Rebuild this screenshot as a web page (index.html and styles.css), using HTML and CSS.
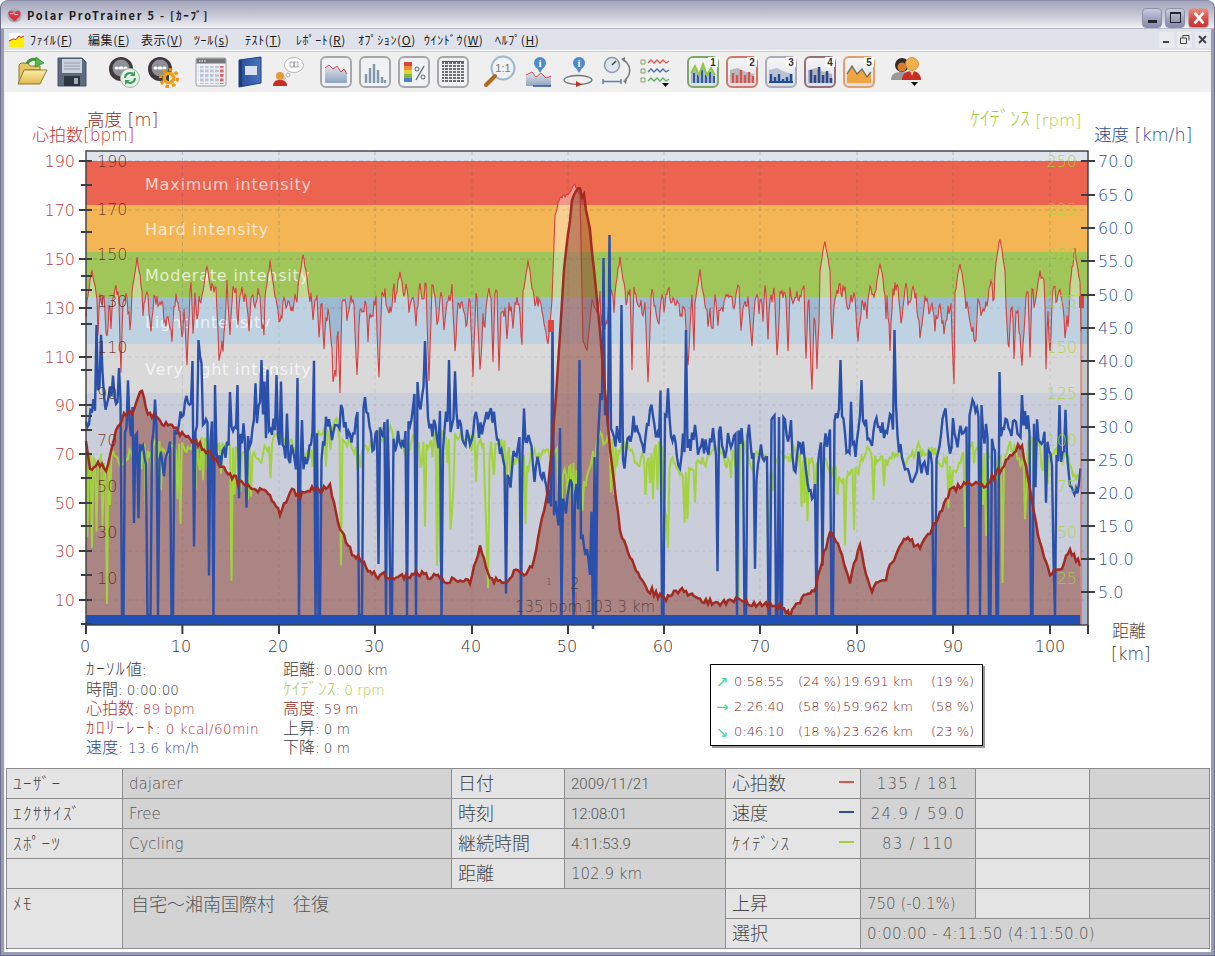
FILE: index.html
```html
<!DOCTYPE html>
<html lang="ja">
<head>
<meta charset="utf-8">
<title>Polar ProTrainer 5</title>
<link rel="stylesheet" href="styles.css">
</head>
<body>
<svg class="defs" aria-hidden="true">
  <defs>
    <linearGradient id="gFolder" x1="0" y1="0" x2="0" y2="1"><stop offset="0" stop-color="#fbeea8"/><stop offset="1" stop-color="#e0b84c"/></linearGradient>
    <linearGradient id="gBtn" x1="0" y1="0" x2="0" y2="1"><stop offset="0" stop-color="#f6f6f8"/><stop offset="1" stop-color="#dcdee4"/></linearGradient>
    <linearGradient id="gArea" x1="0" y1="0" x2="0" y2="1"><stop offset="0" stop-color="#e3e6ee"/><stop offset="1" stop-color="#8ea4c0"/></linearGradient>
    <linearGradient id="gBook" x1="0" y1="0" x2="1" y2="0"><stop offset="0" stop-color="#2a4f9c"/><stop offset="1" stop-color="#4a72bd"/></linearGradient>
    <pattern id="pCal" width="5" height="4.5" patternUnits="userSpaceOnUse"><rect width="3.6" height="3" fill="#b9c2d6"/></pattern>
    <pattern id="pCalR" width="5" height="4.5" patternUnits="userSpaceOnUse"><rect width="3.6" height="3" fill="#d0686a"/></pattern>
    <pattern id="pTab" width="4" height="3" patternUnits="userSpaceOnUse"><rect width="3" height="2" fill="#6a6c74"/></pattern>
  </defs>
</svg>
<div class="window">
  <header class="titlebar">
    <svg class="appicon" viewBox="0 0 16 16"><circle cx="8" cy="8" r="7.5" fill="#a9a9ad"/><path d="M8 14 C3 10 1.500 8 1.500 5.500 C1.500 3 5.500 2 8 5 C10.500 2 14.500 3 14.500 5.500 C14.500 8 13 10 8 14Z" fill="#d8344a"/><path d="M3 6 h3 l1 -1 l1 2 h4" fill="none" stroke="#fff" stroke-width=".8"/></svg>
    <span class="apptitle">Polar ProTrainer 5 - [ｶｰﾌﾞ]</span>
    <div class="winbtns">
      <span class="winbtn"><i class="g-min"></i></span>
      <span class="winbtn"><i class="g-max"></i></span>
      <span class="winbtn winbtn-close"><svg viewBox="0 0 20 20" class="g-x"><path d="M5 4 L15 16 M15 4 L5 16" stroke="#fff" stroke-width="3"/></svg></span>
    </div>
  </header>
  <nav class="menubar">
    <svg class="docicon" viewBox="0 0 15 14"><rect width="15" height="14" fill="#fff"/><rect y="7" width="15" height="7" fill="#ffee00"/><path d="M0 8 L4 6 L7 6.500 L10 3 L12 4.500 L15 3 V7 H0Z" fill="#ffee00"/><path d="M0 8 L4 6 L7 6.500 L10 3 L12 4.500 L15 3" fill="none" stroke="#c8281e"/></svg>
    <span class="mi mi-1">ﾌｧｲﾙ(<u>F</u>)</span>
    <span class="mi mi-2">編集(<u>E</u>)</span>
    <span class="mi mi-3">表示(<u>V</u>)</span>
    <span class="mi mi-4">ﾂｰﾙ(<u>s</u>)</span>
    <span class="mi mi-5">ﾃｽﾄ(<u>T</u>)</span>
    <span class="mi mi-6">ﾚﾎﾟｰﾄ(<u>R</u>)</span>
    <span class="mi mi-7">ｵﾌﾟｼｮﾝ(<u>O</u>)</span>
    <span class="mi mi-8">ｳｲﾝﾄﾞｳ(<u>W</u>)</span>
    <span class="mi mi-9">ﾍﾙﾌﾟ(<u>H</u>)</span>
    <div class="mdibtns">
      <span class="mdibtn"><svg viewBox="0 0 15 15"><rect x="4" y="9" width="6" height="2" fill="#444"/></svg></span>
      <span class="mdibtn"><svg viewBox="0 0 15 15"><path d="M6 3.500 H12 V8.500 M3.500 6 H9.500 V11.500 H3.500Z M6 3 V5.500" fill="none" stroke="#444"/></svg></span>
      <span class="mdibtn"><svg viewBox="0 0 15 15"><path d="M4 4 L11 11 M11 4 L4 11" stroke="#444" stroke-width="2"/></svg></span>
    </div>
  </nav>
  <div class="toolbar">
    <div class="tgroup tg-file">
      <svg class="ic" viewBox="0 0 32 32"><path d="M3 28 V9 L5 7 H12 L14 10 H24 V14 H9 Z" fill="#e6c765" stroke="#8d7a35"/><path d="M8 14 H31 L24 28 H2 Z" fill="url(#gFolder)" stroke="#8d7a35"/><path d="M11 8 C13 3 19 2 22 5" fill="none" stroke="#3f9a3a" stroke-width="3"/><path d="M20 1 L28 7 L19 11 Z" fill="#56b84b" stroke="#2f7f2e" stroke-width=".6"/></svg>
      <svg class="ic" viewBox="0 0 32 32"><path d="M3 2 H27 L31 6 V30 H3 Z" fill="#5c6a80" stroke="#465266"/><rect x="7" y="3" width="20" height="14" fill="#ccd2dc"/><path d="M9 7 H25 M9 10 H25 M9 13 H25" stroke="#8f99a8"/><rect x="9" y="20" width="16" height="10" fill="#2c3442"/><rect x="19" y="22" width="4" height="6" fill="#a8aeb8"/></svg>
    </div>
    <div class="tgroup tg-dash">
      <svg class="ic" viewBox="0 0 32 32"><circle cx="13" cy="13" r="12" fill="#3f383c"/><circle cx="13" cy="12" r="8.500" fill="#8d9097"/><path d="M8 12 h1 M12 12 h2 M17 12 h1" stroke="#fff" stroke-width="3" stroke-linecap="round"/><circle cx="22" cy="22" r="9.500" fill="#e6f0e8" stroke="#9ab8a2"/><path d="M17 22 a5 5 0 0 1 9 -3 M27 22 a5 5 0 0 1 -9 3" fill="none" stroke="#3aa05a" stroke-width="2"/><path d="M27 15 v5 h-5 Z M17 29 v-5 h5 Z" fill="#3aa05a"/></svg>
      <svg class="ic" viewBox="0 0 32 32"><circle cx="13" cy="13" r="12" fill="#3f383c"/><circle cx="13" cy="12" r="8.500" fill="#8d9097"/><path d="M8 12 h1 M12 12 h2 M17 12 h1" stroke="#fff" stroke-width="3" stroke-linecap="round"/><circle cx="22" cy="22" r="8.500" fill="none" stroke="#e6950f" stroke-width="3" stroke-dasharray="3.600 3"/><circle cx="22" cy="22" r="6.500" fill="#eea21b"/><circle cx="22" cy="22" r="3" fill="#3b3a36"/><path d="M22 19 a3 3 0 0 1 0 6Z" fill="#e8e8d8"/></svg>
    </div>
    <div class="tgroup">
      <svg class="ic" viewBox="0 0 32 32"><rect x="1" y="2" width="30" height="28" rx="2" fill="#f0f2f6" stroke="#9c9ea4"/><rect x="1.500" y="2.500" width="29" height="5" fill="#75757c"/><path d="M4 5 h7" stroke="#fff" stroke-dasharray="1.500 1"/><rect x="3.500" y="10" width="20" height="18" fill="url(#pCal)"/><rect x="23.500" y="10" width="6" height="18" fill="url(#pCalR)"/></svg>
      <svg class="ic" viewBox="0 0 32 32"><path d="M5 4 L27 1 V27 L5 31 Z" fill="url(#gBook)" stroke="#1f3e80"/><path d="M5 4 V31 H8 V5 Z" fill="#1e3a78"/><rect x="11" y="10" width="12" height="9" fill="#d8e0ef"/></svg>
      <svg class="ic" viewBox="0 0 32 32"><ellipse cx="21" cy="9" rx="9.500" ry="7.500" fill="#fff" stroke="#b6b6ba"/><path d="M17 6 h4 v5 h-4z M21 6 h4 v5 h-4z" fill="#fff" stroke="#909096" stroke-width=".8"/><circle cx="15" cy="19" r="2" fill="#fff" stroke="#b6b6ba"/><circle cx="11" cy="22" r="1.300" fill="#fff" stroke="#b6b6ba"/><circle cx="7" cy="20" r="4" fill="#e69a38"/><path d="M0 30 C0 25 3 24 7 24 C11 24 14 25 14 30Z" fill="#c92e24"/></svg>
    </div>
    <div class="tgroup">
      <svg class="ic" viewBox="0 0 32 32"><rect x="1" y="1" width="30" height="30" rx="5" fill="#f0f1f3" stroke="#a5a7ab" stroke-width="2"/><path d="M5 12 L9 9 L13 13 L17 10 L21 16 L24 13 L27 18 V27 H5Z" fill="url(#gArea)"/><path d="M5 12 L9 9 L13 13 L17 10 L21 16 L24 13 L27 18" fill="none" stroke="#d8484e"/></svg>
      <svg class="ic" viewBox="0 0 32 32"><rect x="1" y="1" width="30" height="30" rx="5" fill="#f0f1f3" stroke="#a5a7ab" stroke-width="2"/><path d="M7 27 V18 M11 27 V12 M15 27 V8 M19 27 V14 M23 27 V21 M26 27 V24" stroke="#7e97ad" stroke-width="2.400"/></svg>
      <svg class="ic" viewBox="0 0 32 32"><rect x="1" y="1" width="30" height="30" rx="5" fill="#f0f1f3" stroke="#a5a7ab" stroke-width="2"/><rect x="6" y="6" width="8" height="4" fill="#d8433a"/><rect x="6" y="10" width="8" height="4" fill="#ee8f2a"/><rect x="6" y="14" width="8" height="4" fill="#e8d232"/><rect x="6" y="18" width="8" height="4" fill="#7ebb3b"/><rect x="6" y="22" width="8" height="4" fill="#4a82c4"/><circle cx="19" cy="13" r="2" fill="none" stroke="#5c6470"/><circle cx="25" cy="21" r="2" fill="none" stroke="#5c6470"/><path d="M26 10 L18 24" stroke="#5c6470" stroke-width="1.300"/></svg>
      <svg class="ic" viewBox="0 0 32 32"><rect x="1" y="1" width="30" height="30" rx="5" fill="#f0f1f3" stroke="#a5a7ab" stroke-width="2"/><rect x="5" y="6" width="22" height="20" fill="url(#pTab)"/><path d="M5 5.500 H27" stroke="#555"/></svg>
    </div>
    <div class="tgroup">
      <svg class="ic" viewBox="0 0 32 32"><circle cx="19" cy="12" r="11.500" fill="#f0f2f6" stroke="#9fb6cc" stroke-width="2"/><text x="19" y="16" class="ic-txt" text-anchor="middle">1:1</text><path d="M11 20 L2 29" stroke="#b06a20" stroke-width="4" stroke-linecap="round"/></svg>
      <svg class="ic" viewBox="0 0 32 32"><circle cx="17" cy="7" r="6" fill="#4c8ad0"/><text x="17" y="11" class="ic-i" text-anchor="middle">i</text><path d="M14 12 L17 17 L20 12Z" fill="#4c8ad0"/><path d="M3 19 L9 16 L13 21 L18 17 L23 22 L28 20 V30 H3Z" fill="url(#gArea)"/><path d="M3 19 L9 16 L13 21 L18 17 L23 22 L28 20" fill="none" stroke="#dc4a4a"/><path d="M10 30 H28" stroke="#2b55a8" stroke-width="1.500"/></svg>
      <svg class="ic" viewBox="0 0 32 32"><circle cx="17" cy="7" r="6" fill="#4c8ad0"/><text x="17" y="11" class="ic-i" text-anchor="middle">i</text><path d="M14 12 L17 17 L20 12Z" fill="#4c8ad0"/><ellipse cx="16" cy="24" rx="14" ry="4.500" fill="none" stroke="#707478" stroke-width="1.300"/><path d="M14 25 L20 28.500 L14 31Z" fill="#c92e24"/></svg>
      <svg class="ic" viewBox="0 0 32 32"><circle cx="11" cy="9" r="7.500" fill="#dde6ef" stroke="#8c98a6" stroke-width="1.500"/><path d="M11 9 L15 5" stroke="#444" stroke-width="1.500"/><path d="M2 23 V28 M2 25.500 H20 M20 23 V28" stroke="#5d82b0" stroke-width="1.500"/><path d="M22 4 C30 8 31 18 24 24" fill="none" stroke="#777" stroke-width="1.500"/><path d="M20 3 L24 1 L24 6Z M22 25 L26 23 L25 28Z" fill="#777"/></svg>
      <svg class="ic" viewBox="0 0 32 32"><path d="M1 4 h4 v4 h-4z M1 13 h4 v4 h-4z M1 22 h4 v4 h-4z" fill="#f4f6ea" stroke="#6a8a4a" stroke-width=".8"/><path d="M8 7 l3 -3 l3 3 l3 -3 l3 3 l3 -3 l3 3 l3 -2" fill="none" stroke="#d8584e" stroke-width="1.300"/><path d="M8 16 l3 -3 l3 3 l3 -3 l3 3 l3 -3 l3 3 l3 -2" fill="none" stroke="#4a70b8" stroke-width="1.300"/><path d="M8 25 l3 -3 l3 3 l3 -3 l3 3 l3 -3 l3 3 l3 -2" fill="none" stroke="#58b060" stroke-width="1.300"/><path d="M22 27 h7 l-3.500 4z" fill="#111"/></svg>
    </div>
    <div class="tgroup">
      <svg class="ic" viewBox="0 0 32 32"><rect x="1" y="1" width="30" height="30" rx="5" fill="url(#gBtn)" stroke="#7fa868" stroke-width="2"/><path d="M4 27 V16 L8 12 L12 18 L16 10 L20 18 L24 14 L28 20 V27Z" fill="#aab4c4"/><path d="M7 27 V17 M11 27 V19 M15 27 V14 M19 27 V19 M23 27 V16 M27 27 V20" stroke="#2c5ca8" stroke-width="2"/><path d="M4 17 L8 10 L12 19 L16 8 L20 19 L24 12 L28 19" fill="none" stroke="#8cc832" stroke-width="1.800"/><path d="M21 1 H31 V11 H21Z" fill="#fff"/><text x="26" y="10" class="ic-num" text-anchor="middle">1</text></svg>
      <svg class="ic" viewBox="0 0 32 32"><rect x="1" y="1" width="30" height="30" rx="5" fill="url(#gBtn)" stroke="#d07868" stroke-width="2"/><path d="M4 27 V14 L12 12 L20 16 L28 18 V27Z" fill="#b8bac2"/><path d="M7 27 V17 M11 27 V19 M15 27 V14 M19 27 V19 M23 27 V16 M27 27 V20" stroke="#d8544a" stroke-width="2.400"/><path d="M21 1 H31 V11 H21Z" fill="#fff"/><text x="26" y="10" class="ic-num" text-anchor="middle">2</text></svg>
      <svg class="ic" viewBox="0 0 32 32"><rect x="1" y="1" width="30" height="30" rx="5" fill="url(#gBtn)" stroke="#a9acb8" stroke-width="2"/><path d="M4 27 V14 L12 12 L20 16 L28 18 V27Z" fill="#bcc2d0"/><path d="M6 27 V18 M10 27 V21 M14 27 V18 M18 27 V23 M22 27 V21 M26 27 V18" stroke="#1f4c9c" stroke-width="2.400"/><path d="M4 26 H28" stroke="#1f4c9c" stroke-width="2"/><path d="M21 1 H31 V11 H21Z" fill="#fff"/><text x="26" y="10" class="ic-num" text-anchor="middle">3</text></svg>
      <svg class="ic" viewBox="0 0 32 32"><rect x="1" y="1" width="30" height="30" rx="5" fill="url(#gBtn)" stroke="#94707c" stroke-width="2"/><path d="M4 27 V14 L12 12 L20 16 L28 18 V27Z" fill="#b2b4c0"/><path d="M7 27 V14 M11 27 V19 M15 27 V11 M19 27 V19 M23 27 V15 M27 27 V22" stroke="#2c4888" stroke-width="2.600"/><path d="M21 1 H31 V11 H21Z" fill="#fff"/><text x="26" y="10" class="ic-num" text-anchor="middle">4</text></svg>
      <svg class="ic" viewBox="0 0 32 32"><rect x="1" y="1" width="30" height="30" rx="5" fill="url(#gBtn)" stroke="#e0a068" stroke-width="2"/><path d="M4 27 V18 L9 10 L14 18 L19 13 L24 21 L28 16 V27Z" fill="#f0a440"/><path d="M4 18 L9 10 L14 18 L19 13 L24 21 L28 16" fill="none" stroke="#6a6a60" stroke-width="1.300"/><path d="M21 1 H31 V11 H21Z" fill="#fff"/><text x="26" y="10" class="ic-num" text-anchor="middle">5</text></svg>
    </div>
    <div class="tgroup">
      <svg class="ic" viewBox="0 0 32 32"><circle cx="12" cy="9" r="7" fill="#332b28"/><circle cx="12" cy="11" r="4.500" fill="#d87a2c"/><path d="M1 24 C1 17 6 16 12 16 C18 16 20 19 20 24Z" fill="#9a9a9c"/><circle cx="22" cy="8" r="6.500" fill="#f0b050" stroke="#c88830" stroke-width=".8"/><path d="M12 24 C12 18 16 15 22 15 C28 15 31 19 31 24Z" fill="#c92e24"/><path d="M20 15 L22 20 L24 15Z" fill="#eecf8f"/><path d="M21 26 h7 l-3.500 4z" fill="#111"/></svg>
    </div>
  </div>
  <main class="client">
    <svg id="chart" class="chart" viewBox="5 92 1207 568" width="1207" height="568">
      <rect x="86" y="151" width="1002" height="474" fill="#dfe4ea"/>
      <rect x="86" y="161" width="1002" height="44" fill="#ec6350"/>
      <rect x="86" y="205" width="1002" height="47" fill="#f4b655"/>
      <rect x="86" y="252" width="1002" height="45" fill="#a0c65a"/>
      <rect x="86" y="297" width="1002" height="47" fill="#9cbbd2"/>
      <rect x="86" y="344" width="1002" height="49" fill="#c5c5c5"/>
      <rect x="86" y="393" width="1002" height="232" fill="#acb4c7"/>
      <g class="zone">
        <text x="145" y="190">Maximum intensity</text>
        <text x="145" y="235">Hard intensity</text>
        <text x="145" y="281">Moderate intensity</text>
        <text x="145" y="328">Light intensity</text>
        <text x="145" y="375">Very light intensity</text>
      </g>
      <path class="grid" d="M86 161H1088M86 210H1088M86 259H1088M86 308H1088M86 357H1088M86 405H1088M86 454H1088M86 503H1088M86 551H1088M86 600H1088M182.400 151V625M279 151V625M375 151V625M472 151V625M568 151V625M664 151V625M760 151V625M857 151V625M953 151V625M1050 151V625"/>
      <path id="hrFill" class="hr-fill"/>
      <path id="hrLine" class="hr-line"/>
      <path id="altFill" class="alt-fill"/>
      <path id="cadLine" class="cad-line"/>
      <path id="spdLine" class="spd-line"/>
      <path id="altLine" class="alt-line"/>
      <rect x="86" y="615" width="994" height="10" fill="#2050b5"/>
      <path d="M1081 298V625" stroke="#d8584e" stroke-width="1"/>
      <rect x="1079" y="296" width="5" height="12" fill="#d8453f"/>
      <rect x="548" y="320" width="5" height="12" fill="#e0443c"/>
      <path d="M576 592V615" stroke="#d8453f"/>
      <g class="readout">
        <text x="570" y="589">2</text>
        <text x="546" y="585" class="readout-s">1</text>
        <text x="515" y="612">135 bpm</text>
        <text x="584" y="612">103.3 km</text>
      </g>
      <g class="alt-lab">
        <text x="97" y="167">190</text><text x="97" y="215">170</text><text x="97" y="260">150</text><text x="97" y="307">130</text><text x="97" y="353">110</text><text x="97" y="399">90</text><text x="97" y="446">70</text><text x="97" y="492">50</text><text x="97" y="538">30</text><text x="97" y="584">10</text>
      </g>
      <g class="cad-lab">
        <text x="1077" y="167">250</text><text x="1077" y="215">225</text><text x="1077" y="260">200</text><text x="1077" y="307">175</text><text x="1077" y="353">150</text><text x="1077" y="399">125</text><text x="1077" y="446">100</text><text x="1077" y="492">75</text><text x="1077" y="538">50</text><text x="1077" y="584">25</text>
      </g>
      <rect x="86" y="151" width="1002" height="474" class="frame"/>
      <path class="ticks" d="M79 161H92M79 210H92M79 259H92M79 308H92M79 357H92M79 405H92M79 454H92M79 503H92M79 551H92M79 600H92M81 185H92M81 232H92M81 276H92M81 290H92M81 324H92M81 370H92M81 416H92M81 430H92M81 478H92M81 526H92M81 575H92M81 624H92M1081 161H1095M1081 195H1095M1081 228H1095M1081 261H1095M1081 295H1095M1081 328H1095M1081 361H1095M1081 394H1095M1081 427H1095M1081 460H1095M1081 493H1095M1081 526H1095M1081 559H1095M1081 592H1095M86 625V634M182.400 625V634M279 625V634M375 625V634M472 625V634M568 625V634M664 625V634M760 625V634M857 625V634M953 625V634M1050 625V634M1088 625V634"/>
      <g class="hr-lab">
        <text x="75" y="167">190</text><text x="75" y="216">170</text><text x="75" y="265">150</text><text x="75" y="314">130</text><text x="75" y="363">110</text><text x="75" y="411">90</text><text x="75" y="460">70</text><text x="75" y="509">50</text><text x="75" y="557">30</text><text x="75" y="606">10</text>
      </g>
      <g class="spd-lab">
        <text x="1098" y="167">70.0</text><text x="1098" y="201">65.0</text><text x="1098" y="234">60.0</text><text x="1098" y="267">55.0</text><text x="1098" y="301">50.0</text><text x="1098" y="334">45.0</text><text x="1098" y="367">40.0</text><text x="1098" y="400">35.0</text><text x="1098" y="433">30.0</text><text x="1098" y="466">25.0</text><text x="1098" y="499">20.0</text><text x="1098" y="532">15.0</text><text x="1098" y="565">10.0</text><text x="1098" y="598">5.0</text>
      </g>
      <g class="x-lab">
        <text x="85" y="652">0</text><text x="181" y="652">10</text><text x="278" y="652">20</text><text x="374" y="652">30</text><text x="471" y="652">40</text><text x="567" y="652">50</text><text x="663" y="652">60</text><text x="760" y="652">70</text><text x="856" y="652">80</text><text x="953" y="652">90</text><text x="1050" y="652">100</text>
      </g>
      <text x="87" y="126" class="ax-alt">高度 [m]</text>
      <text x="32" y="141" class="ax-hr">心拍数[bpm]</text>
      <text x="970" y="126" class="ax-cad"><tspan class="ax-kana">ｹｲﾃﾞﾝｽ</tspan> [rpm]</text>
      <text x="1094" y="141" class="ax-spd">速度 [km/h]</text>
      <text x="1112" y="637" class="ax-dist">距離</text>
      <text x="1111" y="660" class="ax-dist">[km]</text>
    </svg>
    <section class="info">
      <div class="info-col info-col-a">
        <div><span class="kn">ｶｰｿﾙ</span><span class="kj">値</span>:</div>
        <div><span class="kj">時間</span>: 0:00:00</div>
        <div class="c-hr"><span class="kj">心拍数</span>: 89 bpm</div>
        <div class="c-hr c-wide"><span class="kn">ｶﾛﾘｰﾚｰﾄ</span>: 0 kcal/60min</div>
        <div class="c-spd"><span class="kj">速度</span>: 13.6 km/h</div>
      </div>
      <div class="info-col info-col-b">
        <div><span class="kj">距離</span>: 0.000 km</div>
        <div class="c-cad"><span class="kn kn-tight">ｹｲﾃﾞﾝｽ</span>: 0 rpm</div>
        <div class="c-alt"><span class="kj">高度</span>: 59 m</div>
        <div><span class="kj">上昇</span>: 0 m</div>
        <div><span class="kj">下降</span>: 0 m</div>
      </div>
      <div class="slopes">
        <span class="arrow">↗</span><span>0:58:55</span><span>(24 %)</span><span>19.691 km</span><span>(19 %)</span>
        <span class="arrow">→</span><span>2:26:40</span><span>(58 %)</span><span>59.962 km</span><span>(58 %)</span>
        <span class="arrow">↘</span><span>0:46:10</span><span>(18 %)</span><span>23.626 km</span><span>(23 %)</span>
      </div>
    </section>
    <table class="summary">
      <colgroup><col class="w1"><col class="w2"><col class="w3"><col class="w4"><col class="w5"><col class="w6"><col class="w7"><col class="w8"></colgroup>
      <tr><th class="kana">ﾕｰｻﾞｰ</th><td>dajarer</td><th>日付</th><td class="num">2009/11/21</td><th><span class="legend">心拍数<i class="sw sw-hr"></i></span></th><td class="ctr">135 / 181</td><th></th><td></td></tr>
      <tr><th class="kana">ｴｸｻｻｲｽﾞ</th><td>Free</td><th>時刻</th><td class="num">12:08:01</td><th><span class="legend">速度<i class="sw sw-spd"></i></span></th><td class="ctr">24.9 / 59.0</td><th></th><td></td></tr>
      <tr><th class="kana">ｽﾎﾟｰﾂ</th><td>Cycling</td><th>継続時間</th><td class="num">4:11:53.9</td><th><span class="legend kana">ｹｲﾃﾞﾝｽ<i class="sw sw-cad"></i></span></th><td class="ctr">83 / 110</td><th></th><td></td></tr>
      <tr><th></th><td></td><th>距離</th><td>102.9 km</td><th></th><td></td><th></th><td></td></tr>
      <tr><th rowspan="2" class="kana top">ﾒﾓ</th><td rowspan="2" colspan="3" class="memo">自宅～湘南国際村　往復</td><th>上昇</th><td>750 (-0.1%)</td><th></th><td></td></tr>
      <tr><th>選択</th><td colspan="3" class="sel">0:00:00 - 4:11:50 (4:11:50.0)</td></tr>
    </table>
  </main>
</div>
<script src="chart.js"></script>
</body>
</html>
```
FILE: styles.css
```css
* { box-sizing: border-box; }
html, body { margin: 0; padding: 0; background: #fff; }
body { width: 1215px; height: 956px; overflow: hidden; font-family: "DejaVu Sans", "Noto Sans CJK JP", sans-serif; font-weight: 200; color: #444; }
.defs { position: absolute; width: 0; height: 0; }
.window { width: 1215px; height: 956px; display: flex; flex-direction: column; border: 1px solid #6d6f8e; border-top-color: #8a8ca8; border-radius: 8px 8px 0 0; background: #9a9cb6; padding: 0 3px 3px; }
.titlebar { flex: none; height: 28px; margin: 0 -3px; padding: 0 5px 0 6px; display: flex; align-items: center; gap: 5px; background: linear-gradient(#a2a4ba 0, #b0b2c5 20%, #d2d3de 65%, #f1f1f5 96%, #8a8ca2 100%); border-radius: 7px 7px 0 0; }
.appicon { width: 15px; height: 15px; flex: none; }
.apptitle { font: 700 11px "Noto Sans CJK JP", "DejaVu Sans", sans-serif; letter-spacing: 1.750px; color: #1b1b20; }
.winbtns { margin-left: auto; margin-top: 5px; display: flex; gap: 3px; }
.winbtn { width: 20px; height: 20px; border-radius: 4px; border: 1px solid #8f91ac; background: linear-gradient(#c9cbdc, #9da0bc 60%, #888bab); display: flex; align-items: center; justify-content: center; }
.winbtn-close { width: 21px; border-color: #c9a0a0; background: linear-gradient(#ee8878, #d8453f 60%, #c23636); }
.g-min { width: 9px; height: 3px; background: #24262e; margin-top: 8px; }
.g-max { width: 11px; height: 11px; border: 1px solid #24262e; border-top-width: 2px; }
.g-x { width: 18px; height: 18px; }
.menubar { flex: none; height: 22px; display: flex; align-items: center; background: #dfe2ea; border-bottom: 1px solid #fff; padding-left: 5px; }
.docicon { width: 15px; height: 14px; flex: none; margin-right: 6px; }
.mi { font: 400 12px "Noto Sans CJK JP", "DejaVu Sans", sans-serif; letter-spacing: .6px; color: #1a1a1a; white-space: nowrap; }
.mi u { text-underline-offset: 1px; }
.mi-1 { width: 58px; }
.mi-2 { width: 53px; }
.mi-3 { width: 53px; }
.mi-4 { width: 51px; }
.mi-5 { width: 51px; }
.mi-6 { width: 62px; }
.mi-7 { width: 66px; }
.mi-8 { width: 71px; }
.mdibtns { margin-left: auto; display: flex; gap: 3px; padding-right: 1px; }
.mdibtn { width: 15px; height: 16px; background: #e9eaee; display: block; }
.mdibtn svg { display: block; width: 15px; height: 15px; }
.toolbar { flex: none; height: 41px; display: flex; align-items: center; gap: 15px; padding-left: 12px; background: #efefef; border-top: 1px solid #c9c9c9; }
.tgroup { display: flex; gap: 7px; }
.tg-file { margin-right: 6px; }
.tg-dash { margin-right: 1px; }
.ic { width: 32px; height: 32px; flex: none; display: block; overflow: visible; }
.ic-txt { font: 400 11px "Liberation Sans", sans-serif; fill: #777; }
.ic-i { font: 700 11px "Liberation Serif", serif; fill: #fff; }
.ic-num { font: 700 10px "Liberation Sans", sans-serif; fill: #333; }
.client { flex: 1; min-height: 0; background: #fff; border-left: 1px solid #eee; display: flex; flex-direction: column; }
.chart { flex: none; display: block; width: 1207px; height: 568px; overflow: visible; }
.chart text { font-family: "DejaVu Sans", "Noto Sans CJK JP", sans-serif; font-weight: 200; font-size: 16px; }
.zone text { fill: rgba(255,255,255,.72); font-size: 16px; letter-spacing: .8px; font-weight: 400; }
.grid { fill: none; stroke: rgba(90,90,90,.28); stroke-dasharray: 4 3; }
.hr-fill { fill: rgba(255,255,255,.35); }
.hr-line { fill: none; stroke: #d63f3f; stroke-width: 1.100; }
.alt-fill { fill: rgba(141,58,46,.5); }
.alt-line { fill: none; stroke: #a12a22; stroke-width: 2.500; }
.cad-line { fill: none; stroke: #a2d23c; stroke-width: 2; }
.spd-line { fill: none; stroke: #2a50ab; stroke-width: 2.400; }
.frame { fill: none; stroke: #3a3d42; stroke-width: 1.400; }
.ticks { fill: none; stroke: #3a3d42; stroke-width: 2; }
.readout text { fill: rgba(60,50,50,.8); font-size: 15px; }
.readout .readout-s { font-size: 9px; }
.alt-lab text { fill: rgba(95,35,20,.85); }
.cad-lab text { fill: rgba(170,210,60,.9); text-anchor: end; }
.hr-lab text { fill: #b53a3f; text-anchor: end; }
.spd-lab text { fill: #2f4f8c; }
.x-lab text { fill: #333; text-anchor: middle; }
.chart .ax-alt { fill: #8b2b25; font-size: 17.500px; }
.chart .ax-hr { fill: #c1383a; font-size: 17px; }
.chart .ax-cad { fill: #a9cc3e; font-size: 16.500px; }
.chart .ax-kana { font-size: 20px; }
.chart .ax-spd { fill: #2d4e92; font-size: 17.500px; }
.chart .ax-dist { fill: #444; font-size: 17px; }
.info { flex: none; height: 108px; display: flex; padding-left: 81px; font-size: 13.500px; color: #3c3c3c; }
.info-col > div { height: 19.500px; line-height: 19.500px; white-space: nowrap; }
.kn { font-size: 17px; letter-spacing: 1.500px; }
.kn-tight { letter-spacing: .3px; }
.kj { font-size: 16px; }
.info-col-a { width: 197px; }
.info-col-b { width: 427px; }
.c-hr { color: #b23034; }
.c-wide { letter-spacing: .5px; }
.c-spd { color: #2a4a88; letter-spacing: .3px; }
.c-cad { color: #a5cc3f; }
.c-alt { color: #8b2b25; }
.slopes { width: 273px; height: 82px; margin-top: 4px; background: #fff; border: 1px solid #000; box-shadow: 2px 2px 0 #9a9a9a; display: grid; grid-template-columns: 18px 64px 45px 88px 42px; align-items: center; padding: 5px 0 1px 5px; font-size: 13px; line-height: 24px; color: #7a2a2a; white-space: nowrap; }
.arrow { color: #3ad88f; font-size: 15px; font-weight: 400; }
.summary { flex: none; margin-left: 1px; width: 1203px; height: 180px; table-layout: fixed; border-collapse: collapse; font-size: 15px; color: #555; }
.summary th, .summary td { border: 1px solid #8c8c8c; height: 30px; padding: 0 6px; font-weight: 200; text-align: left; white-space: nowrap; overflow: hidden; }
.summary th { background: #e4e4e4; font-size: 18px; color: #444; padding-bottom: 3px; }
.summary td { background: #d3d3d3; }
.summary th.kana, .summary .kana { font-size: 17px; letter-spacing: 1.500px; }
.summary .top, .summary .memo { vertical-align: top; padding-top: 1px; }
.summary .memo { font-size: 18px; padding-left: 8px; }
.summary .num { font-family: "Roboto", "Liberation Sans", sans-serif; font-weight: 300; font-size: 15px; }
.summary .ctr { text-align: center; letter-spacing: 1.200px; }
.summary .sel { letter-spacing: .3px; }
.w1 { width: 116px; } .w2 { width: 329px; } .w3 { width: 113px; } .w4 { width: 161px; }
.w5 { width: 135px; } .w6 { width: 115px; } .w7 { width: 114px; } .w8 { width: 120px; }
.legend { display: flex; align-items: center; justify-content: space-between; }
.sw { width: 15px; height: 2px; flex: none; }
.sw-hr { background: #d8584e; }
.sw-spd { background: #2d4e92; }
.sw-cad { background: #a5cc3f; }
```
FILE: chart.js
```js
(function () {
  var s = 20091121;
  function rnd() {
    s = (s + 0x6D2B79F5) | 0;
    var t = Math.imul(s ^ (s >>> 15), 1 | s);
    t = (t + Math.imul(t ^ (t >>> 7), 61 | t)) ^ t;
    return ((t ^ (t >>> 14)) >>> 0) / 4294967296;
  }
  function lerp(keys, x) {
    for (var i = 1; i < keys.length; i++) {
      if (x <= keys[i][0]) {
        var a = keys[i - 1], b = keys[i];
        return a[1] + (b[1] - a[1]) * (x - a[0]) / (b[0] - a[0]);
      }
    }
    return keys[keys.length - 1][1];
  }
  function toD(p) {
    return 'M' + p.map(function (q) { return q[0].toFixed(1) + ' ' + q[1].toFixed(1); }).join('L');
  }
  function set(id, d) { document.getElementById(id).setAttribute('d', d); }

  var END = 1081, FLOOR = 625;

  /* altitude */
  var altKeys = [[86,440],[90,470],[97,462],[106,470],[115,432],[125,412],[133,416],[141,388],[147,410],[160,422],[175,430],[190,438],[205,450],[225,470],[240,483],[255,490],[270,495],[280,515],[290,490],[300,495],[310,490],[320,490],[330,487],[340,530],[350,550],[362,562],[375,575],[395,577],[420,573],[445,580],[470,583],[480,548],[490,578],[505,585],[515,570],[525,575],[533,565],[540,530],[548,490],[556,400],[564,270],[572,200],[578,188],[584,197],[590,232],[600,330],[610,450],[615,490],[620,530],[630,555],[640,580],[650,590],[665,600],[680,590],[700,600],[720,605],[735,600],[750,603],[765,605],[780,607],[790,615],[800,600],[815,590],[825,550],[832,530],[840,550],[850,580],[860,545],[870,590],[885,580],[895,555],[905,540],[920,545],[935,525],[950,490],[965,485],[985,485],[1000,470],[1015,450],[1022,445],[1030,490],[1040,545],[1050,575],[1060,570],[1070,550],[END,565]];
  var alt = [];
  for (var x = 86; x <= END; x += 2) alt.push([x, lerp(altKeys, x) + (rnd() - 0.5) * 7]);
  set('altLine', toD(alt));
  set('altFill', toD(alt) + 'L' + END + ' ' + FLOOR + 'L86 ' + FLOOR + 'Z');

  /* heart rate */
  var peaks = [[92,268],[137,257],[207,265],[270,262],[303,253],[400,270],[528,260],[620,258],[700,272],[825,240],[880,262],[960,262],[1000,238],[1040,270],[1075,250]];
  var hr = [], i, n = END - 86;
  var hrW = 0, slow = 0;
  for (i = 0; i <= n; i++) {
    slow = slow * 0.96 + (rnd() - 0.5) * 6;
    hrW = hrW * 0.65 + (rnd() - 0.5) * 18;
    hr.push(294 + slow + hrW);
  }
  /* V-shaped dips, frequent and varied */
  for (i = 0; i <= n;) {
    var depth = rnd() < 0.4 ? 35 + rnd() * 50 : 12 + rnd() * 28;
    var half = 1 + Math.floor(rnd() * 3);
    for (var j = -half; j <= half; j++) {
      if (i + j >= 0 && i + j <= n) hr[i + j] += depth * (1 - Math.abs(j) / (half + 1));
    }
    i += 3 + Math.floor(rnd() * 9);
  }
  peaks.forEach(function (p) {
    for (var k = -5; k <= 5; k++) {
      var idx = p[0] - 86 + k;
      if (idx >= 0 && idx <= n) {
        var y = p[1] + Math.abs(k) * 6.5 + (rnd() - 0.5) * 6;
        hr[idx] = Math.min(hr[idx], y);
      }
    }
  });
  var peakKeys = [[540,300],[548,345],[552,300],[555,215],[560,197],[568,195],[574,184],[580,195],[583,340],[587,350],[592,300],[598,315],[600,290]];
  var pts = [];
  for (i = 0; i <= n; i++) {
    var hx = 86 + i;
    var hy = (hx >= 540 && hx <= 600) ? lerp(peakKeys, hx) + (rnd() - 0.5) * 3 : hr[i];
    pts.push([hx, Math.max(hy, 180)]);
  }
  set('hrLine', toD(pts));
  set('hrFill', toD(pts) + 'L' + END + ' ' + FLOOR + 'L86 ' + FLOOR + 'Z');

  /* cadence */
  var cad = [], cw = 0;
  for (var cx = 86; cx <= 1078; cx += 1.5) {
    cw = cw * 0.8 + (rnd() - 0.5) * 16;
    var cy = lerp([[86,450],[200,445],[360,440],[520,450],[560,462],[590,470],[600,440],[650,458],[760,460],[900,458],[1000,452],[1078,470]], cx) + cw;
    var q = rnd();
    var rich = (cx < 260 || (cx > 430 && cx < 620) || cx > 1020) ? 1.6 : 1;
    if (q < 0.08 * rich) cy += 15 + rnd() * 35;
    else if (q < 0.115 * rich) cy += 45 + rnd() * 50;
    else if (q < 0.125 * rich) cy += 90 + rnd() * 70;
    cad.push([cx, cy]);
  }
  set('cadLine', toD(cad));

  /* speed */
  var spdKeys = [[86,430],[120,425],[150,455],[180,425],[230,420],[280,420],[330,440],[380,440],[430,415],[480,425],[530,440],[545,490],[560,500],[575,500],[590,550],[600,420],[650,425],[700,440],[760,445],[800,450],[850,450],[900,440],[960,430],[1000,420],[1040,440],[END,480]];
  var tall = [[96,325],[198,340],[215,385],[238,385],[262,360],[277,375],[298,378],[341,405],[449,360],[552,320],[560,428],[579,360],[604,258],[610,235],[622,305],[686,330],[840,360],[862,380],[895,330],[1000,372],[1022,395],[1060,405]];
  var spd = [], sw = 0, floorRun = 0;
  for (var sx = 86; sx <= END; sx += 1.5) {
    sw = sw * 0.82 + (rnd() - 0.5) * 34;
    var sy = lerp(spdKeys, sx) + sw;
    var u = rnd();
    if (floorRun > 0) { sy = 615; floorRun--; }
    else if (u < 0.05) { sy = 615; floorRun = Math.floor(rnd() * 2.2); }
    else if (u < 0.085) sy += 50 + rnd() * 100;
    else if (u < 0.22 && sx > 190 && sx < 320) sy -= 25 + rnd() * 45;
    else if (u < 0.125) sy -= 20 + rnd() * 30;
    tall.forEach(function (t) { if (Math.abs(sx - t[0]) < 1) sy = t[1]; });
    spd.push([sx, sy]);
  }
  set('spdLine', toD(spd));
})();
```
